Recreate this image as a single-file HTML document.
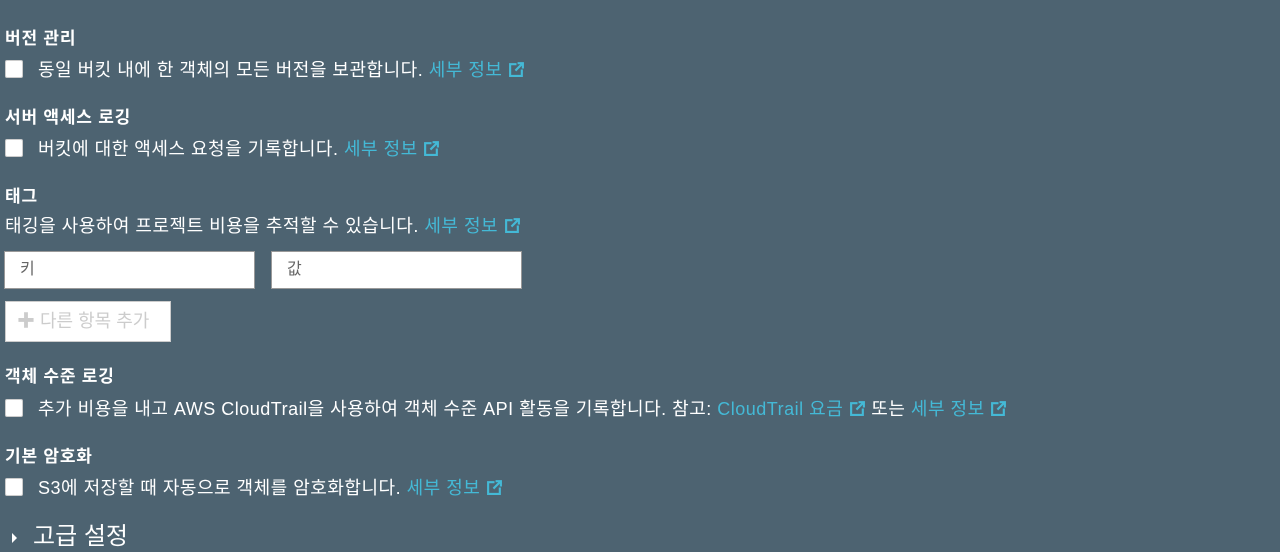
<!DOCTYPE html><html><head><meta charset="utf-8"><style>
body{margin:0;width:1280px;height:547px;background:#4d6371;overflow:hidden;font-family:"Liberation Sans","Noto Sans CJK KR",sans-serif;color:#fff;position:relative}
.a{position:absolute;white-space:nowrap}
.h{font-size:17px;font-weight:bold;left:5px;line-height:20px;letter-spacing:0.8px}
.t{font-size:18px;line-height:20px;letter-spacing:0.5px}
.cb{position:absolute;left:5px;width:18px;height:18px;background:#fff;border-radius:2px;border:1px solid #ccc;box-sizing:border-box}
.l{color:#44b9d6}
svg{vertical-align:-2px}
.in{position:absolute;background:#fff;border:1px solid #999;box-sizing:border-box;height:38px;color:#666;font-size:16px;line-height:36px;padding-left:15px}
</style></head><body>
<div class="a h" style="top:29px">버전 관리</div>
<div class="cb" style="top:60px"></div>
<div class="a t" style="left:38px;top:60px">동일 버킷 내에 한 객체의 모든 버전을 보관합니다. <span class="l">세부 정보 <svg width="17" height="17" viewBox="0 0 16 16" fill="none" stroke="#44b9d6" stroke-width="2"><path d="M8 3H2v11h11V8"/><path d="M7 9l7-7M9 2h5v5"/></svg></span></div>
<div class="a h" style="top:108px">서버 액세스 로깅</div>
<div class="cb" style="top:139px"></div>
<div class="a t" style="left:38px;top:139px">버킷에 대한 액세스 요청을 기록합니다. <span class="l">세부 정보 <svg width="17" height="17" viewBox="0 0 16 16" fill="none" stroke="#44b9d6" stroke-width="2"><path d="M8 3H2v11h11V8"/><path d="M7 9l7-7M9 2h5v5"/></svg></span></div>
<div class="a h" style="top:187px">태그</div>
<div class="a t" style="left:5px;top:216px">태깅을 사용하여 프로젝트 비용을 추적할 수 있습니다. <span class="l">세부 정보 <svg width="17" height="17" viewBox="0 0 16 16" fill="none" stroke="#44b9d6" stroke-width="2"><path d="M8 3H2v11h11V8"/><path d="M7 9l7-7M9 2h5v5"/></svg></span></div>
<div class="in" style="left:4px;top:251px;width:251px">키</div>
<div class="in" style="left:271px;top:251px;width:251px">값</div>
<div class="a" style="left:5px;top:301px;width:166px;height:41px;background:#fff;border:1px solid #ccc;box-sizing:border-box;color:#ccc;font-size:18px;line-height:39px;padding-left:11px"><b style="font-size:18px">✚</b> 다른 항목 추가</div>
<div class="a h" style="top:367px">객체 수준 로깅</div>
<div class="cb" style="top:399px"></div>
<div class="a t" style="left:38px;top:399px">추가 비용을 내고 AWS CloudTrail을 사용하여 객체 수준 API 활동을 기록합니다. 참고: <span class="l">CloudTrail 요금 <svg width="17" height="17" viewBox="0 0 16 16" fill="none" stroke="#44b9d6" stroke-width="2"><path d="M8 3H2v11h11V8"/><path d="M7 9l7-7M9 2h5v5"/></svg></span> 또는 <span class="l">세부 정보 <svg width="17" height="17" viewBox="0 0 16 16" fill="none" stroke="#44b9d6" stroke-width="2"><path d="M8 3H2v11h11V8"/><path d="M7 9l7-7M9 2h5v5"/></svg></span></div>
<div class="a h" style="top:447px">기본 암호화</div>
<div class="cb" style="top:478px"></div>
<div class="a t" style="left:38px;top:478px">S3에 저장할 때 자동으로 객체를 암호화합니다. <span class="l">세부 정보 <svg width="17" height="17" viewBox="0 0 16 16" fill="none" stroke="#44b9d6" stroke-width="2"><path d="M8 3H2v11h11V8"/><path d="M7 9l7-7M9 2h5v5"/></svg></span></div>
<div class="a" style="left:12px;top:533px;width:0;height:0;border-left:5px solid #fff;border-top:5px solid transparent;border-bottom:5px solid transparent"></div>
<div class="a" style="left:33px;top:522px;font-size:24px;line-height:30px">고급 설정</div>
</body></html>
